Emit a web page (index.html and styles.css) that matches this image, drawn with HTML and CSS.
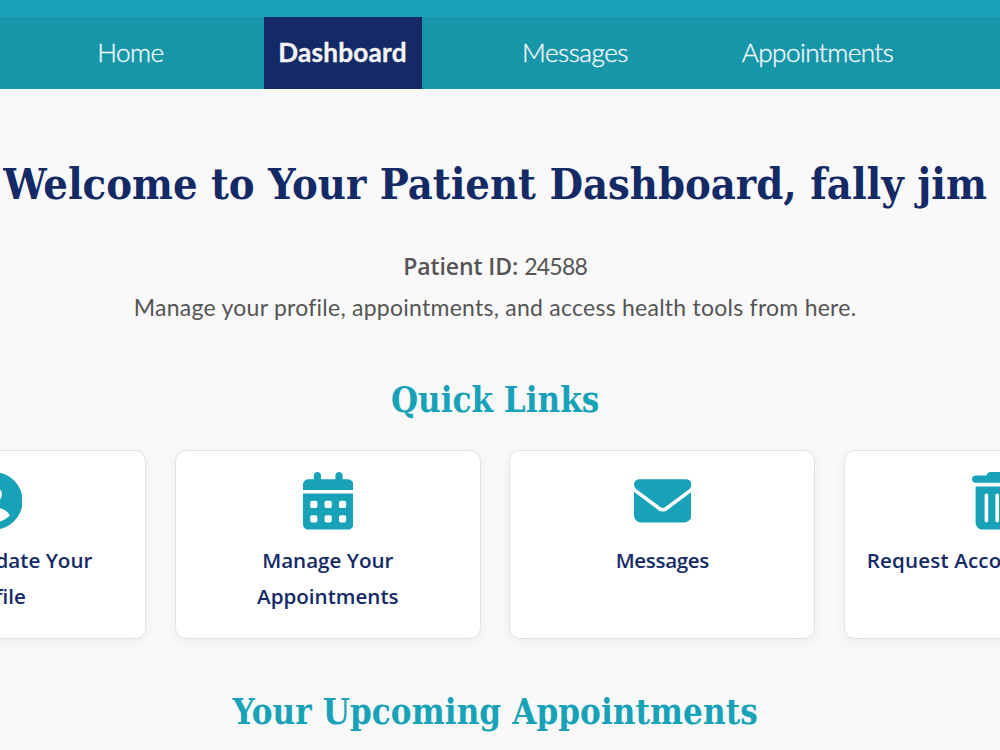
FILE: index.html
```html
<!DOCTYPE html>
<html lang="en">
<head>
    <meta charset="UTF-8">
    <meta name="viewport" content="width=device-width, initial-scale=1.0">
    <title>Patient Dashboard</title>
    <link rel="stylesheet" href="styles.css">
</head>
<body>
    <!-- Header -->
    <header class="site-header"></header>

    <!-- Navigation -->
    <nav class="navbar">
        <a href="#" class="nav-home">Home</a>
        <a href="#" class="nav-dashboard active">Dashboard</a>
        <a href="#" class="nav-messages">Messages</a>
        <a href="#" class="nav-appointments">Appointments</a>
    </nav>

    <main class="dashboard">
        <!-- Welcome -->
        <section class="welcome">
            <h1>Welcome to Your Patient Dashboard, fally jim</h1>
            <p><strong>Patient ID:</strong> <span class="patient-id">24588</span></p>
            <p>Manage your profile, appointments, and access health tools from here.</p>
        </section>

        <!-- Quick Links -->
        <section class="quick-links">
            <h2>Quick Links</h2>
            <div class="cards">
                <a href="#" class="card">
                    <svg class="icon" viewBox="0 0 512 512"><path d="M399 384.2C376.9 345.8 335.4 320 288 320H224c-47.4 0-88.9 25.8-111 64.2c35.2 39.2 86.2 63.8 143 63.8s107.8-24.7 143-63.8zM0 256a256 256 0 1 1 512 0A256 256 0 1 1 0 256zm256 16a72 72 0 1 0 0-144 72 72 0 1 0 0 144z" fill-rule="evenodd"/></svg>
                    <span>View &amp; Update Your Profile</span>
                </a>
                <a href="#" class="card">
                    <svg class="icon" viewBox="0 0 448 512"><path d="M128 0c17.7 0 32 14.3 32 32V64H288V32c0-17.7 14.3-32 32-32s32 14.3 32 32V64h48c26.5 0 48 21.5 48 48v48H0V112C0 85.5 21.5 64 48 64H96V32c0-17.7 14.3-32 32-32zM0 192H448V464c0 26.5-21.5 48-48 48H48c-26.5 0-48-21.5-48-48V192zm64 80v32c0 8.8 7.2 16 16 16h32c8.8 0 16-7.2 16-16V272c0-8.8-7.2-16-16-16H80c-8.8 0-16 7.2-16 16zm128 0v32c0 8.8 7.2 16 16 16h32c8.8 0 16-7.2 16-16V272c0-8.8-7.2-16-16-16H208c-8.8 0-16 7.2-16 16zm128 0v32c0 8.8 7.2 16 16 16h32c8.8 0 16-7.2 16-16V272c0-8.8-7.2-16-16-16H336c-8.8 0-16 7.2-16 16zM64 400v32c0 8.8 7.2 16 16 16h32c8.8 0 16-7.2 16-16V400c0-8.8-7.2-16-16-16H80c-8.8 0-16 7.2-16 16zm128 0v32c0 8.8 7.2 16 16 16h32c8.8 0 16-7.2 16-16V400c0-8.8-7.2-16-16-16H208c-8.8 0-16 7.2-16 16zm128 0v32c0 8.8 7.2 16 16 16h32c8.8 0 16-7.2 16-16V400c0-8.8-7.2-16-16-16H336c-8.8 0-16 7.2-16 16z" fill-rule="evenodd"/></svg>
                    <span>Manage Your<br>Appointments</span>
                </a>
                <a href="#" class="card card-messages">
                    <svg class="icon" viewBox="0 0 512 512"><path d="M48 64C21.5 64 0 85.5 0 112c0 15.1 7.1 29.3 19.2 38.4L236.8 313.6c11.4 8.5 27 8.5 38.4 0L492.8 150.4c12.1-9.1 19.2-23.3 19.2-38.4c0-26.5-21.5-48-48-48H48zM0 176V384c0 35.3 28.7 64 64 64H448c35.3 0 64-28.7 64-64V176L294.4 339.2c-22.8 17.1-54 17.1-76.8 0L0 176z"/></svg>
                    <span>Messages</span>
                </a>
                <a href="#" class="card card-delete">
                    <svg class="icon" viewBox="0 0 448 512"><path d="M135.2 17.7L128 32H32C14.3 32 0 46.3 0 64S14.3 96 32 96H416c17.7 0 32-14.3 32-32s-14.3-32-32-32H320l-7.2-14.3C307.4 6.8 296.3 0 284.2 0H163.8c-12.1 0-23.2 6.8-28.6 17.7zM416 128H32V448c0 35.3 28.7 64 64 64H352c35.3 0 64-28.7 64-64V128zM144 208V432c0 8.8-7.2 16-16 16s-16-7.2-16-16V208c0-8.8 7.2-16 16-16s16 7.2 16 16zm96 0V432c0 8.8-7.2 16-16 16s-16-7.2-16-16V208c0-8.8 7.2-16 16-16s16 7.2 16 16zm96 0V432c0 8.8-7.2 16-16 16s-16-7.2-16-16V208c0-8.8 7.2-16 16-16s16 7.2 16 16z" fill-rule="evenodd"/></svg>
                    <span>Request Account Deletion</span>
                </a>
            </div>
        </section>

        <!-- Appointments -->
        <section class="upcoming">
            <h2>Your Upcoming Appointments</h2>
        </section>
    </main>
</body>
</html>
```
FILE: styles.css
```css
/* General */
* {
    box-sizing: border-box;
    margin: 0;
    padding: 0;
}

body {
    height: 750px;
    overflow: hidden;
    background-color: #f9f9f9;
    color: #555;
    font-family: Lato, sans-serif;
    font-size: 23px;
}

h1, h2 {
    font-family: "DejaVu Serif Condensed", "DejaVu Serif", serif;
    font-weight: bold;
    white-space: nowrap;
}

a {
    text-decoration: none;
}

/* Header and navigation */
.site-header {
    height: 17px;
    background-color: #17a2b8;
}

.navbar {
    display: flex;
    gap: 86px;
    height: 72.3px;
    padding-left: 83.5px;
    background-color: #1796aa;
}

.navbar a {
    flex: none;
    color: #f4f9fa;
    font-size: 26.2px;
    font-weight: 300;
    line-height: 70px;
    text-align: center;
    white-space: nowrap;
    -webkit-text-stroke: 0.35px;
}

.navbar .active {
    background-color: #142a66;
    color: #f4f4f4;
    font-weight: bold;
    letter-spacing: 0.2px;
}

.nav-home {
    width: 94px;
    letter-spacing: -0.6px;
}

.nav-dashboard {
    width: 158px;
}

.nav-messages {
    width: 135px;
    letter-spacing: -0.5px;
}

.nav-appointments {
    width: 180px;
    margin-left: -1px;
    letter-spacing: -0.6px;
}

/* Dashboard */
.dashboard {
    width: 1309.2px;
    margin-left: -159.5px;
    text-align: center;
}

.welcome {
    padding-top: 61px;
}

h1 {
    margin-bottom: 27.5px;
    color: #142a66;
    font-size: 43px;
    line-height: 68px;
}

.welcome p {
    line-height: 40.8px;
    letter-spacing: 0.25px;
}

.welcome strong {
    font-family: "Open Sans", sans-serif;
    font-weight: 600;
    letter-spacing: -0.11px;
}

.patient-id {
    letter-spacing: -0.8px;
}

h2 {
    color: #17a2b8;
    font-size: 34.6px;
    line-height: 50px;
}

/* Quick links */
.quick-links {
    padding-top: 47.6px;
}

.quick-links h2 {
    margin-bottom: 24.8px;
}

.cards {
    display: grid;
    grid-template-columns: repeat(4, 1fr);
    gap: 28.8px;
}

.card {
    display: flex;
    flex-direction: column;
    align-items: center;
    height: 188.8px;
    padding: 21.5px;
    background-color: #fff;
    border: 1px solid #e3e3e3;
    border-radius: 11px;
    box-shadow: 0 4px 14px rgba(0, 0, 0, 0.05);
    color: #142a66;
    font-family: "Open Sans", sans-serif;
    font-size: 20.6px;
    font-weight: 600;
    line-height: 36.5px;
}

.card-messages {
    letter-spacing: -0.35px;
}

.card-delete {
    letter-spacing: 0.15px;
    white-space: nowrap;
}

.icon {
    height: 57.6px;
    margin-bottom: 12px;
    fill: #17a2b8;
}

/* Upcoming appointments */
.upcoming {
    padding-top: 48px;
}

.upcoming h2 {
    letter-spacing: 0.1px;
}
```
